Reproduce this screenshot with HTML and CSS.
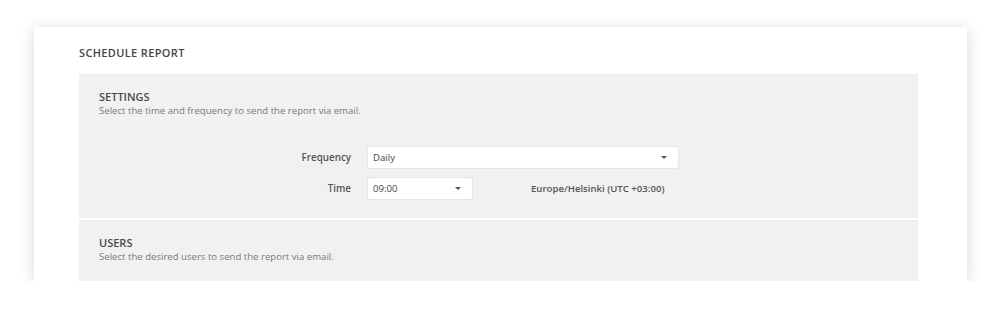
FILE: index.html
```html
<!DOCTYPE html>
<html lang="en">
<head>
    <meta charset="UTF-8">
    <meta name="viewport" content="width=device-width, initial-scale=1.0">
    <title>Schedule Report</title>
    <link rel="stylesheet" href="styles.css">
</head>
<body>
    <div class="card">
        <h1 class="card-title">SCHEDULE REPORT</h1>

        <section class="panel">
            <h2>SETTINGS</h2>
            <p class="hint">Select the time and frequency to send the report via email.</p>

            <div class="form">
                <div class="form-row">
                    <label>Frequency</label>
                    <div class="select select-wide">
                        <span>Daily</span>
                        <span class="caret"></span>
                    </div>
                </div>
                <div class="form-row">
                    <label>Time</label>
                    <div class="select select-narrow">
                        <span>09:00</span>
                        <span class="caret"></span>
                    </div>
                    <span class="timezone">Europe/Helsinki (UTC +03:00)</span>
                </div>
            </div>
        </section>

        <section class="panel">
            <h2>USERS</h2>
            <p class="hint">Select the desired users to send the report via email.</p>
        </section>
    </div>
</body>
</html>
```

FILE: styles.css
```css
:root {
    --panel-color: #f1f1f1;
    --text-color: #444444;
    --muted-color: #7a7a7a;
}

body {
    margin: 0;
    padding: 27px 33px 0 34px;
    background-color: #ffffff;
    font-family: 'Open Sans', sans-serif;
    color: var(--text-color);
}

.card {
    width: 933px;
    height: 254px;
    padding: 0 49px 0 45px;
    box-sizing: border-box;
    background-color: #ffffff;
    box-shadow: 0 2px 14px rgba(0, 0, 0, 0.16);
    overflow: hidden;
}

.card-title {
    margin: 0;
    padding: 17px 0 13px 0;
    font-size: 11px;
    line-height: 17px;
    font-weight: 600;
    letter-spacing: 0.35px;
}

.panel {
    background-color: var(--panel-color);
    border-top: 1px solid #e8e8e8;
    padding: 14px 20px 18px 20px;
    margin-bottom: 2px;
}

.panel h2 {
    margin: 0;
    font-size: 11px;
    line-height: 15px;
    font-weight: 600;
    color: #4a4a4a;
}

.hint {
    margin: 0;
    font-size: 9.6px;
    line-height: 13px;
    color: var(--muted-color);
}

.form {
    display: flex;
    flex-direction: column;
    gap: 8px;
    margin-top: 29px;
}

.form-row {
    display: flex;
    align-items: center;
}

.form-row label {
    width: 252px;
    margin-right: 16px;
    text-align: right;
    font-size: 9.8px;
    font-weight: 600;
    color: #555555;
}

.select {
    display: flex;
    align-items: center;
    justify-content: space-between;
    height: 23px;
    padding: 0 11px 0 5px;
    box-sizing: border-box;
    background-color: #ffffff;
    border: 1px solid #e6e6e6;
    border-radius: 2px;
    font-size: 9.6px;
    color: #444444;
}

.select-wide {
    width: 312px;
}

.select-narrow {
    width: 106px;
}

.caret {
    width: 0;
    height: 0;
    border-left: 3px solid transparent;
    border-right: 3px solid transparent;
    border-top: 3px solid #555555;
}

.timezone {
    margin-left: 58px;
    font-size: 9.6px;
    font-weight: 600;
    color: #555555;
}
```
